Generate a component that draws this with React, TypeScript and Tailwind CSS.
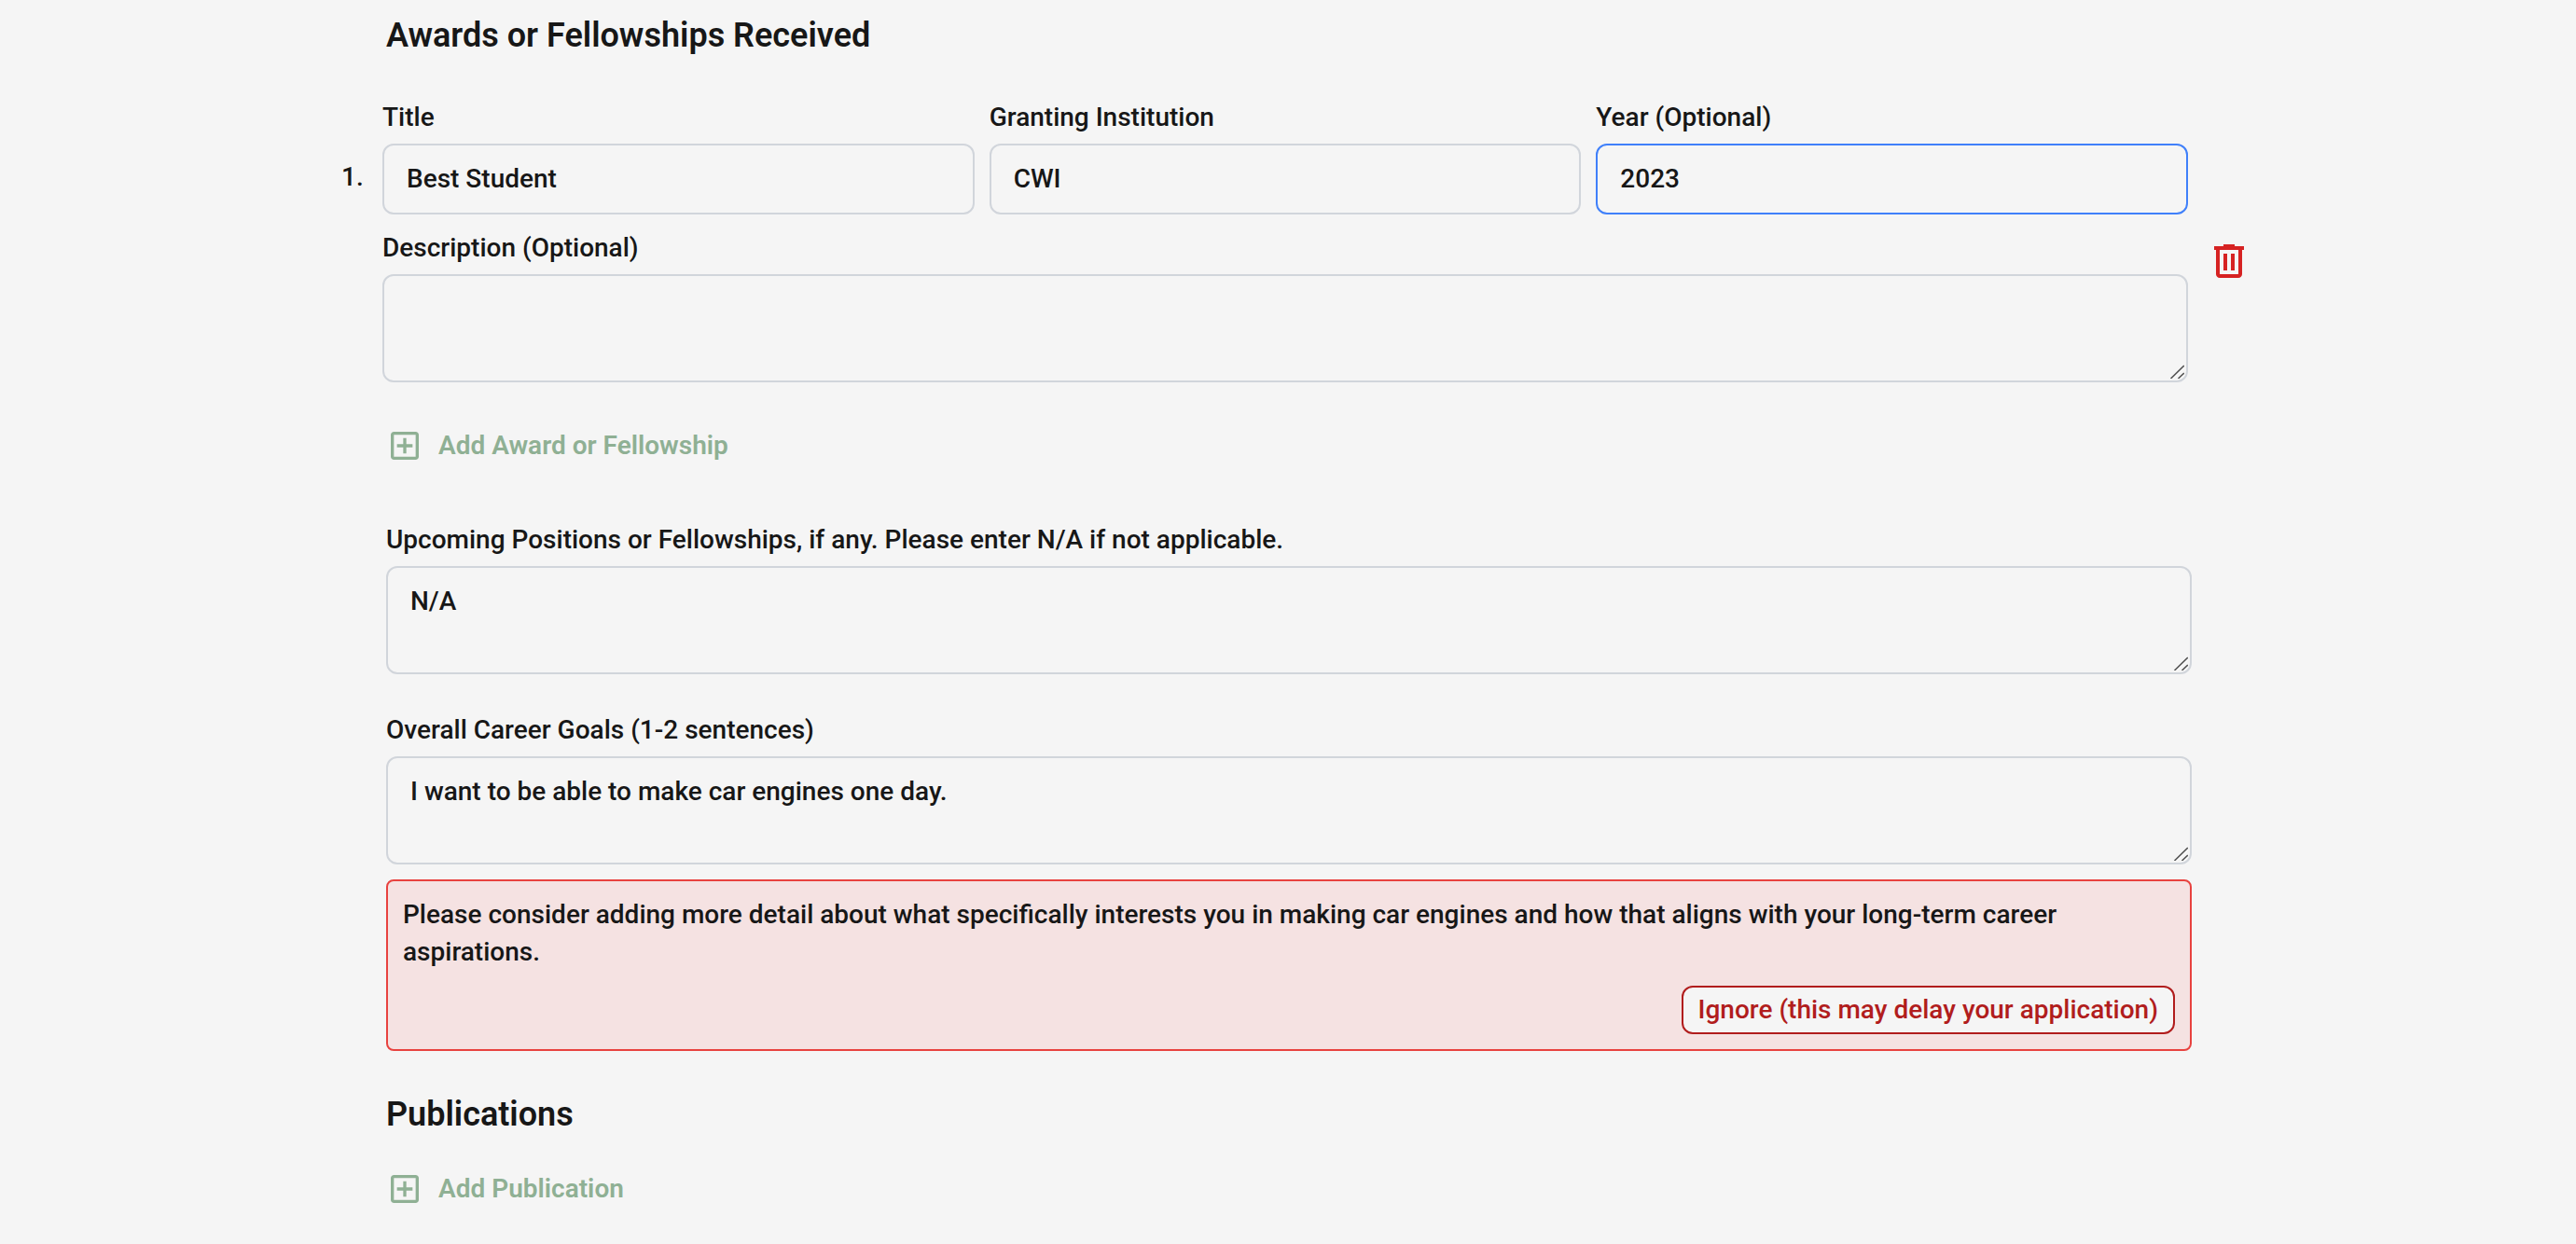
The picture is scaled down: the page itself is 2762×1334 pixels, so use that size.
import { useId, useState } from "react";

const control =
  "block w-full rounded-xl border-2 bg-transparent px-6 py-4 text-[28px] leading-10 outline-none";

function TextField({
  label,
  initial,
  active = false,
}: {
  label: string;
  initial: string;
  active?: boolean;
}) {
  const id = useId();
  const [value, setValue] = useState(initial);
  return (
    <div className="flex min-w-0 flex-col gap-2">
      <label htmlFor={id}>{label}</label>
      <input
        id={id}
        type="text"
        value={value}
        onChange={(e) => setValue(e.target.value)}
        className={`${control} ${active ? "border-[#4080fa]" : "border-[#d1d5db] focus:border-[#4080fa]"}`}
      />
    </div>
  );
}

function TextArea({ label, initial = "" }: { label: string; initial?: string }) {
  const id = useId();
  const [value, setValue] = useState(initial);
  return (
    <div className="flex flex-col gap-2">
      <label htmlFor={id}>{label}</label>
      <div className="relative">
        <textarea
          id={id}
          value={value}
          onChange={(e) => setValue(e.target.value)}
          className={`${control} h-[116px] resize-none border-[#d1d5db] focus:border-[#4080fa]`}
        />
        <svg
          viewBox="0 0 16 16"
          className="pointer-events-none absolute right-1 bottom-1 size-4"
          fill="none"
          aria-hidden="true"
        >
          <path d="M3 16.5 16.5 3M11 16.5 16.5 11" stroke="#fff" strokeWidth="1.4" />
          <path d="M1.5 16 15.8 2M9.5 16 15.8 10" stroke="#555" strokeWidth="1.6" />
        </svg>
      </div>
    </div>
  );
}

function AddButton({ children }: { children: string }) {
  return (
    <button
      type="button"
      className="flex items-center gap-4 self-start font-semibold text-[#8fb094]"
    >
      <svg viewBox="0 0 24 24" className="size-10" fill="currentColor" aria-hidden="true">
        <path d="M11 17h2v-4h4v-2h-4V7h-2v4H7v2h4v4Zm-6 4q-.825 0-1.412-.587Q3 19.825 3 19V5q0-.825.588-1.413Q4.175 3 5 3h14q.825 0 1.413.587Q21 4.175 21 5v14q0 .825-.587 1.413Q19.825 21 19 21H5Zm0-2h14V5H5v14Z" />
      </svg>
      <span>{children}</span>
    </button>
  );
}

function Award() {
  return (
    <div className="-mr-16 -ml-12 flex items-start">
      <span className="mt-16 w-11 shrink-0">1.</span>
      <div className="flex min-w-0 flex-1 flex-col gap-4">
        <div className="grid grid-cols-3 gap-4">
          <TextField label="Title" initial="Best Student" />
          <TextField label="Granting Institution" initial="CWI" />
          <TextField label="Year (Optional)" initial="2023" active />
        </div>
        <TextArea label="Description (Optional)" />
      </div>
      <button
        type="button"
        aria-label="Remove award"
        className="mt-[150px] ml-5 shrink-0 text-[#d62222]"
      >
        <svg viewBox="0 0 24 24" className="size-12" fill="currentColor" aria-hidden="true">
          <path d="M7 21q-.825 0-1.412-.587Q5 19.825 5 19V6H4V4h5V3h6v1h5v2h-1v13q0 .825-.587 1.413Q17.825 21 17 21H7ZM17 6H7v13h10V6ZM9 17h2V8H9v9Zm4 0h2V8h-2v9Z" />
        </svg>
      </button>
    </div>
  );
}

export default function App() {
  return (
    <main className="min-h-screen bg-[#f5f5f5] px-20 pt-[18px] pb-8 font-[Roboto,sans-serif] text-[28px] leading-10 font-medium text-[#171717]">
      <form className="mx-auto flex w-full max-w-[1938px] flex-col pl-0.5">
        <h2 className="mb-12 text-[36px] leading-10 font-semibold">Awards or Fellowships Received</h2>
        <Award />
        <div className="mt-12 flex flex-col">
          <AddButton>Add Award or Fellowship</AddButton>
        </div>
        <div className="mt-[61px] flex flex-col gap-10">
          <TextArea
            label="Upcoming Positions or Fellowships, if any. Please enter N/A if not applicable."
            initial="N/A"
          />
          <TextArea
            label="Overall Career Goals (1-2 sentences)"
            initial="I want to be able to make car engines one day."
          />
        </div>
        <div
          role="alert"
          className="mt-4 flex flex-col gap-4 rounded-lg border-2 border-[#e8423f] bg-[#f5e2e2] p-4"
        >
          <p>
            Please consider adding more detail about what specifically interests you in making car
            engines and how that aligns with your long-term career aspirations.
          </p>
          <button
            type="button"
            className="self-end rounded-xl border-2 border-[#b11d1d] bg-[#f5f5f5] px-4 py-1 text-[#b11d1d]"
          >
            Ignore (this may delay your application)
          </button>
        </div>
        <h2 className="mt-12 mb-10 text-[36px] leading-10 font-semibold">Publications</h2>
        <AddButton>Add Publication</AddButton>
      </form>
    </main>
  );
}
